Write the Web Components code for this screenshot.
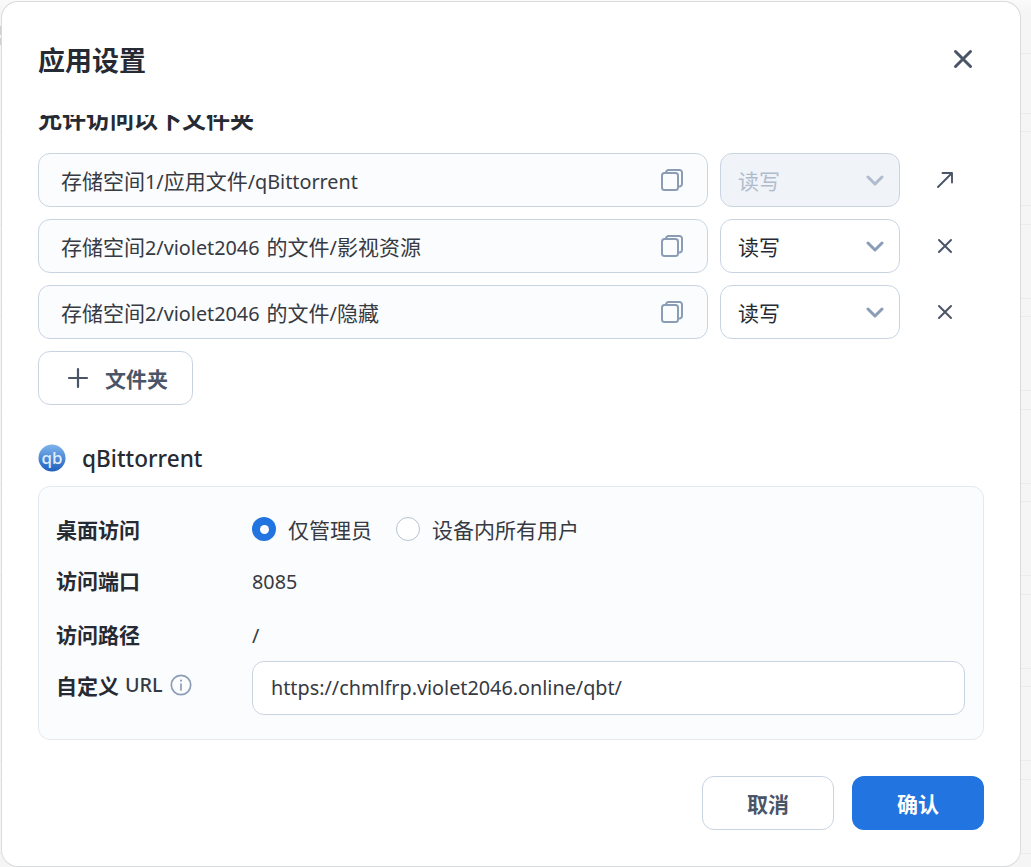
<!DOCTYPE html>
<html><head><meta charset="utf-8"><style>
html,body{margin:0;height:100%;overflow:hidden}
body{font-family:"Noto Sans CJK SC",sans-serif;color:#262a33;padding:2px 0 0 2px;box-sizing:border-box;
background:
 linear-gradient(#d0d0d2,#d0d0d2) 0 26px/1px 9px no-repeat,
 linear-gradient(#d0d0d2,#d0d0d2) 0 38px/1px 7px no-repeat,
 linear-gradient(#ececee,#ececee) 0 53px/100% 1px no-repeat,
 linear-gradient(#ececee,#ececee) 0 131px/100% 1px no-repeat,
 repeating-linear-gradient(to bottom,#ececee 0 1px,transparent 1px 18.500px,#ececee 18.500px 19.500px,transparent 19.500px 92.500px) 0 113px/100% 100% no-repeat,
 linear-gradient(#fafafb,#f5f5f6 13px) #f5f5f6}
</style></head><body>
<app-dialog>
  <span slot="title">应用设置</span>
  <h-section>允许访问以下文件夹</h-section>
  <folder-row path="存储空间<la-t>1/</la-t>应用文件<la-t>/qBittorrent</la-t>" disabled action="open"></folder-row>
  <folder-row path="存储空间<la-t>2/violet2046 </la-t>的文件<la-t>/</la-t>影视资源" action="close"></folder-row>
  <folder-row path="存储空间<la-t>2/violet2046 </la-t>的文件<la-t>/</la-t>隐藏" action="close"></folder-row>
  <add-button>文件夹</add-button>
  <app-title>qBittorrent</app-title>
  <settings-card>
    <setting-row label="桌面访问" style="height:51px"><radio-group></radio-group></setting-row>
    <setting-row label="访问端口" style="height:54px"><la-t>8085</la-t></setting-row>
    <setting-row label="访问路径" style="height:51px"><la-t>/</la-t></setting-row>
    <setting-row label="自定义" suffix="URL" info style="height:54px"><url-input><la-t>https://chmlfrp.violet2046.online/qbt/</la-t></url-input></setting-row>
  </settings-card>
  <dlg-button slot="footer">取消</dlg-button>
  <dlg-button slot="footer" primary>确认</dlg-button>
</app-dialog>
<script>
function def(name,html){
  customElements.define(name,class extends HTMLElement{
    connectedCallback(){
      if(this.shadowRoot)return;
      const r=this.attachShadow({mode:'open'});
      r.innerHTML=typeof html==='function'?html(this):html;
    }
  });
}
const X=(s,w)=>`<svg width="${s}" height="${s}" viewBox="0 0 16 16" fill="none" stroke="#4b5568" stroke-width="${w}" stroke-linecap="round"><path d="M2 2l12 12M14 2L2 14"/></svg>`;
def('la-t',`<style>:host{display:inline;font-family:"Noto Sans",sans-serif;font-size:19.800px;white-space:pre;word-spacing:2px}</style><slot></slot>`);
def('app-dialog',`<style>
:host{display:flex;flex-direction:column;box-sizing:border-box;width:1018px;height:864px;background:#fff;border-radius:16px;box-shadow:0 0 0 1px #d9dbdf;overflow:hidden}
header{flex:none;height:113px;box-sizing:border-box;padding:40px 47px 0 36px;display:flex;justify-content:space-between;font-size:27px;font-weight:700;color:#262a33;line-height:36px}
.c{flex:none;width:20px;height:20px;margin-top:7px;display:flex}
main{flex:none;height:648px;overflow:hidden;padding:0 35px 0 36px;box-sizing:border-box}
footer{flex:1;display:flex;justify-content:flex-end;gap:18px;padding:13px 36px 0 0}
</style><header><slot name="title"></slot><div class="c">${X(20,2.4)}</div></header><main><slot></slot></main><footer><slot name="footer"></slot></footer>`);
def('h-section',`<style>:host{display:block;height:49px;margin-top:-11px;font-size:24px;font-weight:700;line-height:28px;color:#262a33}</style><slot></slot>`);
def('folder-row',h=>{
 const dis=h.hasAttribute('disabled');
 const act=h.getAttribute('action')==='open'
  ?`<svg width="18" height="18" viewBox="0 0 18 18" fill="none" stroke="#4b5568" stroke-width="1.9" stroke-linecap="round" stroke-linejoin="round"><path d="M2 16L16 2M6.500 2H16V11.500"/></svg>`
  :X(16,2);
 return `<style>
:host{display:block;margin-bottom:12px}
.r{display:flex;align-items:center;height:54px}
.p{box-sizing:border-box;width:670px;height:54px;border:1px solid #c9d4e2;border-radius:12px;background:#fbfcfe;display:flex;align-items:center;justify-content:space-between;padding:0 24px 0 22px;font-size:21px;color:#363a42}
.s{box-sizing:border-box;width:180px;height:54px;margin-left:12px;border:1px solid #c9d4e2;border-radius:12px;background:${dis?'#f0f3f8':'#fff'};color:${dis?'#b0bccd':'#262a33'};display:flex;align-items:center;justify-content:space-between;padding:0 15px 0 17px;font-size:21px}
.a{width:20px;margin-left:35px;display:flex;justify-content:center}
</style><div class="r"><div class="p"><span>${h.getAttribute('path')}</span>
<svg width="22" height="22" viewBox="0 0 22 22" fill="none" stroke="#8b9db6" stroke-width="2"><rect x="1" y="4" width="16" height="17" rx="2.500"/><path d="M5 4V3.500A2.500 2.500 0 0 1 7.500 1h11A2.500 2.500 0 0 1 21 3.500V15a2.500 2.500 0 0 1-2.500 2.500H17"/></svg></div>
<div class="s"><span>读写</span><svg width="18" height="11" viewBox="0 0 18 11" fill="none" stroke="${dis?'#b0bccd':'#8b9db6'}" stroke-width="3" stroke-linecap="round" stroke-linejoin="round"><path d="M2 2l7 7 7-7"/></svg></div>
<div class="a">${act}</div></div>`});
def('add-button',`<style>:host{display:inline-flex;box-sizing:border-box;align-items:center;width:155px;height:54px;border:1px solid #c9d4e2;border-radius:12px;padding-left:28px;gap:16px;font-size:21px;font-weight:700;color:#4b5568;vertical-align:top}</style><svg width="22" height="22" viewBox="0 0 22 22" stroke="#4b5568" stroke-width="2.2" stroke-linecap="round"><path d="M11 2v18M2 11h18"/></svg><slot></slot>`);
def('app-title',`<style>:host{display:flex;align-items:center;height:36px;margin-top:35px;gap:16px;font-family:"Noto Sans",sans-serif;font-size:22.600px;font-weight:500;color:#262a33}</style><svg width="28" height="28" viewBox="0 0 28 28"><defs><linearGradient id="g" x1="0" y1="0" x2="0" y2="1"><stop offset="0" stop-color="#7fb4ec"/><stop offset="1" stop-color="#1f5fbd"/></linearGradient></defs><circle cx="14" cy="14" r="13.500" fill="url(#g)"/><text x="14" y="19.500" text-anchor="middle" font-family="Noto Sans" font-size="17" fill="#dfeeff">qb</text></svg><slot></slot>`);
def('settings-card',`<style>:host{display:block;box-sizing:border-box;margin-top:10px;height:254px;width:946px;border:1px solid #e4e8ef;border-radius:12px;background:#fbfcfe;padding:18px 18px 0 17px}</style><slot></slot>`);
def('setting-row',h=>`<style>:host{display:flex;align-items:flex-start;font-size:21px;color:#363a42;line-height:48px}
.l{flex:none;width:196px;font-weight:700;color:#262a33;display:flex;align-items:center;height:48px}
.suf{font-family:"Noto Sans",sans-serif;font-size:19.800px;font-weight:500;margin-left:6px;color:#363a42}
svg{margin-left:7px}
.v{flex:1;min-width:0}</style>
<div class="l">${h.getAttribute('label')}${h.hasAttribute('suffix')?`<span class="suf">${h.getAttribute('suffix')}</span>`:''}${h.hasAttribute('info')?`<svg width="22" height="22" viewBox="0 0 22 22" fill="none" stroke="#8b9db6" stroke-width="1.7" stroke-linecap="round"><circle cx="11" cy="11" r="9.700"/><path d="M11 10v6"/><path d="M11 6.500v.3" stroke-width="2"/></svg>`:''}</div><div class="v"><slot></slot></div>`);
def('radio-group',`<style>:host{display:flex;align-items:center;height:48px;gap:24px}
.o{display:flex;align-items:center;gap:12px}
.on{width:24px;height:24px;border-radius:50%;background:#2274e0;display:flex;align-items:center;justify-content:center}
.on i{width:9px;height:9px;border-radius:50%;background:#fff}
.off{box-sizing:border-box;width:24px;height:24px;border-radius:50%;border:1px solid #b6c2d2;background:#fff}</style>
<div class="o"><span class="on"><i></i></span><span>仅管理员</span></div><div class="o"><span class="off"></span><span>设备内所有用户</span></div>`);
def('url-input',`<style>:host{display:flex;align-items:center;box-sizing:border-box;height:54px;border:1px solid #c9d4e2;border-radius:12px;background:#fff;padding:0 18px;font-size:21px;color:#363a42}</style><slot></slot>`);
def('dlg-button',h=>{const p=h.hasAttribute('primary');return `<style>:host{display:flex;align-items:center;justify-content:center;box-sizing:border-box;height:54px;width:132px;border-radius:12px;font-size:21px;font-weight:700;${p?'background:#2274e0;color:#fff':'border:1px solid #c9d4e2;background:#fff;color:#4b5568'}}</style><slot></slot>`});
</script></body></html>
